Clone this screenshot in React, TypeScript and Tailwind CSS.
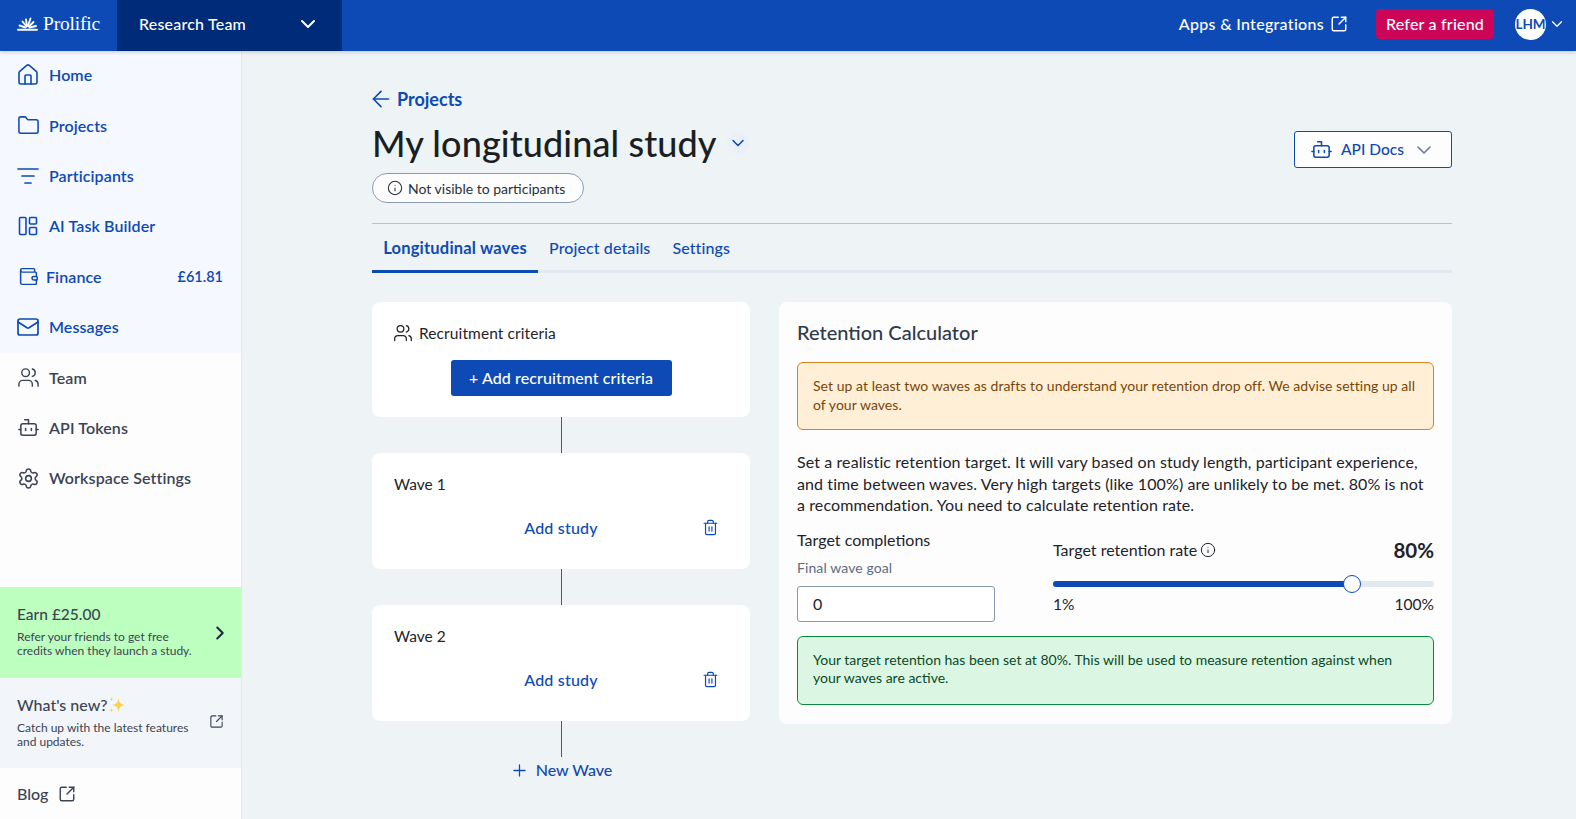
import {
  ArrowLeft,
  Bot,
  ChevronDown,
  ChevronRight,
  Folder,
  House,
  Info,
  ListFilter,
  Mail,
  Plus,
  Settings,
  SquareArrowOutUpRight,
  Trash2,
  Users,
  Wallet,
} from 'lucide-react';
import type { ReactNode } from 'react';

const font = 'font-["Lato","Noto_Sans",sans-serif]';

function ProlificLogo() {
  return (
    <div className="flex items-center gap-[5px] text-white">
      <svg width="21" height="14" viewBox="0 0 21 14" fill="none" stroke="currentColor" strokeWidth="1.9" strokeLinecap="round">
        <path d="M1 12.800h19" />
        <path d="M8.500 10.500 2.500 8.500" />
        <path d="M9.500 9.500 5.500 4.500" />
        <path d="M10 9 9 2.500" />
        <path d="M11 9l2.500-7.500" />
        <path d="M12 9.500 16.500 5" />
        <path d="M12.500 10.500 19 9" />
      </svg>
      <span className='font-["Liberation_Serif",serif] text-[19.500px] leading-none tracking-[-0.2px]'>Prolific</span>
    </div>
  );
}

function TaskBuilderIcon() {
  return (
    <svg width="20" height="20" viewBox="0 0 20 20" fill="none" stroke="currentColor" strokeWidth="1.6">
      <rect x="1.500" y="1.500" width="6.500" height="17" rx="1" />
      <rect x="11.500" y="1.500" width="7" height="6.500" rx="1" />
      <rect x="11.500" y="11.500" width="7" height="7" rx="1" />
    </svg>
  );
}

function NavItem({ icon, label, right, gap = 'gap-[9px]' }: { icon: ReactNode; label: string; right?: string; gap?: string }) {
  return (
    <div className={`flex h-[50.400px] items-center ${gap} pl-[16px] pr-[18px]`}>
      <span className="flex w-[24px] shrink-0 justify-center">{icon}</span>
      <span className="flex-1 text-[16px] font-semibold tracking-[0.1px]">{label}</span>
      {right && <span className="text-[14.500px] font-semibold">{right}</span>}
    </div>
  );
}

function Sidebar() {
  return (
    <aside className="flex w-[242px] shrink-0 flex-col border-r border-[#e3e8ee] bg-[#fdfdfe]">
      <div className="-mt-[1px] bg-[#f5f8ff] pb-[1px] text-[#0d4ab5]">
        <NavItem icon={<House size={24} strokeWidth={1.6} />} label="Home" />
        <NavItem icon={<Folder size={23} strokeWidth={1.6} />} label="Projects" />
        <NavItem icon={<ListFilter size={24} strokeWidth={1.7} />} label="Participants" />
        <NavItem icon={<TaskBuilderIcon />} label="AI Task Builder" />
        <NavItem icon={<Wallet size={21} strokeWidth={1.7} />} label="Finance" right="£61.81" gap="gap-[6px]" />
        <NavItem icon={<Mail size={24} strokeWidth={1.7} />} label="Messages" />
      </div>
      <div className="-mt-[1px] text-[#3c4454]">
        <NavItem icon={<Users size={23} strokeWidth={1.5} />} label="Team" />
        <NavItem icon={<Bot size={23} strokeWidth={1.6} />} label="API Tokens" />
        <NavItem icon={<Settings size={23} strokeWidth={1.6} />} label="Workspace Settings" />
      </div>
      <div className="mt-auto">
        <div className="flex h-[91px] items-center justify-between bg-[#bcffbf] pb-[4px] pl-[17px] pr-[10px] text-[#3c4454]">
          <div>
            <div className="text-[15.500px] font-medium leading-[22px]">Earn £25.00</div>
            <div className="mt-[5px] text-[12px] leading-[14px]">
              Refer your friends to get free
              <br />
              credits when they launch a study.
            </div>
          </div>
          <ChevronRight size={22} strokeWidth={2.2} className="mt-[4px] text-[#1f2937]" />
        </div>
        <div className="flex h-[90px] items-center justify-between bg-[#f2f5f9] pb-[4px] pl-[17px] pr-[17px] text-[#3c4454]">
          <div>
            <div className="flex items-center text-[16px] font-medium leading-[22px]">
              What's new?
              <svg width="17" height="18" viewBox="0 0 17 18" fill="#fcd34d">
                <path d="M10.500 1.500c.6 5 1.700 6.400 6 7.500-4.300 1.100-5.400 2.500-6 7.500-.6-5-1.700-6.400-6-7.500 4.300-1.100 5.400-2.500 6-7.500z" />
                <path d="M3.500 1c.2 1.500.7 2 2 2.200-1.300.2-1.800.7-2 2.200-.2-1.500-.7-2-2-2.200 1.300-.2 1.800-.7 2-2.200z" />
                <path d="M3.500 12c.2 1.500.7 2 2 2.200-1.300.2-1.800.7-2 2.200-.2-1.500-.7-2-2-2.200 1.300-.2 1.800-.7 2-2.200z" />
              </svg>
            </div>
            <div className="mt-[5px] text-[12px] leading-[14px]">
              Catch up with the latest features
              <br />
              and updates.
            </div>
          </div>
          <SquareArrowOutUpRight size={15} strokeWidth={1.8} />
        </div>
        <div className="flex h-[51px] items-center gap-[10px] pl-[17px] text-[#3c4454]">
          <span className="text-[16px] font-medium">Blog</span>
          <SquareArrowOutUpRight size={18} strokeWidth={1.9} />
        </div>
      </div>
    </aside>
  );
}

function Header() {
  return (
    <header className="relative z-10 flex h-[51px] shrink-0 items-center bg-[#0d4ab5] text-white shadow-[0_1px_4px_rgba(0,0,0,0.2)]">
      <div className="flex h-full w-[117px] items-center pb-[3px] pl-[17px]">
        <ProlificLogo />
      </div>
      <div className="flex h-full w-[225px] items-center justify-between bg-[#002b78] pb-[3px] pl-[22px] pr-[22px]">
        <span className="text-[16px] font-medium tracking-[0.2px]">Research Team</span>
        <ChevronDown size={24} strokeWidth={2} />
      </div>
      <div className="ml-auto flex items-center pb-[3px] pr-[10px]">
        <span className="text-[16px] font-medium tracking-[0.3px]">Apps &amp; Integrations</span>
        <SquareArrowOutUpRight size={18} strokeWidth={1.9} className="ml-[6px]" />
        <span className="ml-[28px] flex h-[30px] w-[118px] items-center justify-center rounded-[4px] bg-[#cc0558] text-[16px] font-medium tracking-[0.2px]">
          Refer a friend
        </span>
        <span className="ml-[21px] flex h-[31px] w-[31px] items-center justify-center rounded-full bg-white text-[13.500px] font-bold text-[#0d4ab5]">
          LHM
        </span>
        <ChevronDown size={18} strokeWidth={1.7} className="ml-[2px]" />
      </div>
    </header>
  );
}

function WaveCard({ name }: { name: string }) {
  return (
    <div className="flex h-[116px] flex-col rounded-[8px] bg-white pl-[22px] pr-[31px] pt-[20px]">
      <div className="text-[15.500px] leading-[22px] text-[#1f2328]">{name}</div>
      <div className="relative mt-[22px] flex justify-center pl-[9px] text-[#0d4ab5]">
        <span className="text-[16px] font-medium leading-[22px] tracking-[0.2px]">Add study</span>
        <Trash2 size={17} strokeWidth={1.7} className="absolute right-0 top-[2px]" />
      </div>
    </div>
  );
}

function Connector({ height }: { height: string }) {
  return <div className={`ml-[188.500px] ${height} w-px bg-[#4c5a70]`} />;
}

function WavesColumn() {
  return (
    <div className="w-[378px] shrink-0">
      <div className="h-[115px] rounded-[8px] bg-white pt-[20px]">
        <div className="flex items-center gap-[6px] pl-[21px] text-[15.500px] leading-[22px] tracking-[0.1px] text-[#1f2328]">
          <Users size={20} strokeWidth={1.5} />
          Recruitment criteria
        </div>
        <div className="mt-[16px] flex justify-center">
          <span className="flex h-[36px] w-[221px] items-center justify-center rounded-[3px] bg-[#0d4ab5] text-[16px] font-medium tracking-[0.1px] text-white">
            + Add recruitment criteria
          </span>
        </div>
      </div>
      <Connector height="h-[36px]" />
      <WaveCard name="Wave 1" />
      <Connector height="h-[36px]" />
      <WaveCard name="Wave 2" />
      <Connector height="h-[36px]" />
      <div className="mt-[2px] flex items-center justify-center gap-[7px] text-[#0d4ab5]">
        <Plus size={19} strokeWidth={1.6} />
        <span className="text-[16px] font-medium leading-[22px]">New Wave</span>
      </div>
    </div>
  );
}

function RetentionCard() {
  return (
    <div className="h-[422px] w-[674px] rounded-[8px] bg-[#fdfdfe] px-[18px] pt-[17px]">
      <div className="text-[20px] font-medium leading-[26px] text-[#2f3a4b]">Retention Calculator</div>
      <div className="mt-[17px] h-[68px] rounded-[6px] border border-[#d9811e] bg-[#ffefd6] px-[15px] pt-[13px] text-[14px] leading-[19px] tracking-[0.05px] text-[#7a4608]">
        Set up at least two waves as drafts to understand your retention drop off. We advise setting up all of your waves.
      </div>
      <p className="mt-[21px] text-[16px] leading-[21.500px] tracking-[0.1px] text-[#1f2328]">
        Set a realistic retention target. It will vary based on study length, participant experience, and time between waves. Very high targets (like 100%) are unlikely to be met. 80% is not a recommendation. You need to calculate retention rate.
      </p>
      <div className="mt-[13px] flex">
        <div className="w-[198px] shrink-0">
          <div className="text-[16px] leading-[22px] text-[#1f2328]">Target completions</div>
          <div className="mt-[8px] text-[14px] leading-[18px] tracking-[0.1px] text-[#5d6b80]">Final wave goal</div>
          <div className="mt-[9px] flex h-[36px] items-center rounded-[3px] border border-[#8b9ab3] bg-white pl-[15px] text-[16px] text-[#1f2328]">0</div>
        </div>
        <div className="ml-[58px] flex-1">
          <div className="mt-[10px] flex items-center">
            <span className="text-[16px] leading-[22px] text-[#1f2328]">Target retention rate</span>
            <Info size={16} strokeWidth={1.5} className="ml-[3px] text-[#1f2328]" />
            <span className="ml-auto text-[20.500px] font-bold leading-[22px] text-[#1f2328]">80%</span>
          </div>
          <div className="relative mt-[20px] h-[6px] rounded-full bg-[#e2e8f0]">
            <div className="h-full w-[78.500%] rounded-full bg-[#0d4ab5]" />
            <div className="absolute left-[78.500%] top-[-6px] h-[18px] w-[18px] -translate-x-1/2 rounded-full border border-[#0d4ab5] bg-white" />
          </div>
          <div className="mt-[6px] flex justify-between text-[15.500px] leading-[22px] text-[#1f2328]">
            <span>1%</span>
            <span>100%</span>
          </div>
        </div>
      </div>
      <div className="mt-[14px] h-[69px] rounded-[6px] border border-[#0a8a3c] bg-[#dcf6e4] px-[15px] pt-[14px] text-[14px] leading-[18px] text-[#0a4a24]">
        Your target retention has been set at 80%. This will be used to measure retention against when your waves are active.
      </div>
    </div>
  );
}

function Main() {
  return (
    <main className="min-w-0 flex-1 pl-[130px] pr-[124px] pt-[35px]">
      <div className="flex items-center gap-[3px] text-[#0d4ab5]">
        <ArrowLeft size={26} strokeWidth={1.5} className="-ml-[4px]" />
        <span className="text-[18px] font-bold leading-[24px]">Projects</span>
      </div>
      <div className="relative">
        <div className="mt-[8px] flex h-[46px] items-center">
          <h1 className="text-[36px] font-medium leading-[46px] tracking-[0.1px] text-[#1a1f24]">My longitudinal study</h1>
          <span className="ml-[10px] flex h-[22px] w-[22px] items-center justify-center rounded-full bg-[#e9f0fa] text-[#0d4ab5]">
            <ChevronDown size={20} strokeWidth={1.9} className="shrink-0" />
          </span>
        </div>
        <div className="mt-[7px] flex h-[30px] w-[212px] items-center gap-[5px] rounded-full border border-[#8b9ab3] bg-[#fdfdfe] pl-[14px] text-[14px] text-[#2b2f36]">
          <Info size={16} strokeWidth={1.6} />
          Not visible to participants
        </div>
        <div className="absolute right-0 top-[11px] flex h-[37px] w-[158px] items-center justify-center gap-[8px] rounded-[3px] border border-[#0d4ab5] bg-[#fdfdfe] text-[#0d4ab5]">
          <Bot size={23} strokeWidth={1.6} />
          <span className="text-[15.500px] font-medium">API Docs</span>
          <ChevronDown size={24} strokeWidth={1.6} className="text-[#6b7a90]" />
        </div>
      </div>
      <div className="mt-[20px] border-t border-[#b6c3d3]" />
      <div className="flex h-[49px] items-end border-b-[3px] border-[#e2e8f0] text-[16px] text-[#0d4ab5]">
        <span className="-mb-[3px] flex h-[49px] w-[166px] items-center justify-center border-b-[3px] border-[#0d4ab5] pt-[2px] text-[16.500px] font-bold tracking-[0.2px]">Longitudinal waves</span>
        <span className="-mb-[3px] flex h-[49px] items-center border-b-[3px] border-transparent pl-[11px] pt-[2px] font-medium tracking-[0.1px]">Project details</span>
        <span className="-mb-[3px] flex h-[49px] items-center border-b-[3px] border-transparent pl-[22px] pt-[2px] font-medium tracking-[0.1px]">Settings</span>
      </div>
      <div className="mt-[29px] flex items-start gap-[29px]">
        <WavesColumn />
        <RetentionCard />
      </div>
    </main>
  );
}

export default function App() {
  return (
    <div className={`flex h-[819px] w-[1576px] flex-col overflow-hidden bg-[#eef3f6] ${font}`}>
      <Header />
      <div className="flex min-h-0 flex-1">
        <Sidebar />
        <Main />
      </div>
    </div>
  );
}
